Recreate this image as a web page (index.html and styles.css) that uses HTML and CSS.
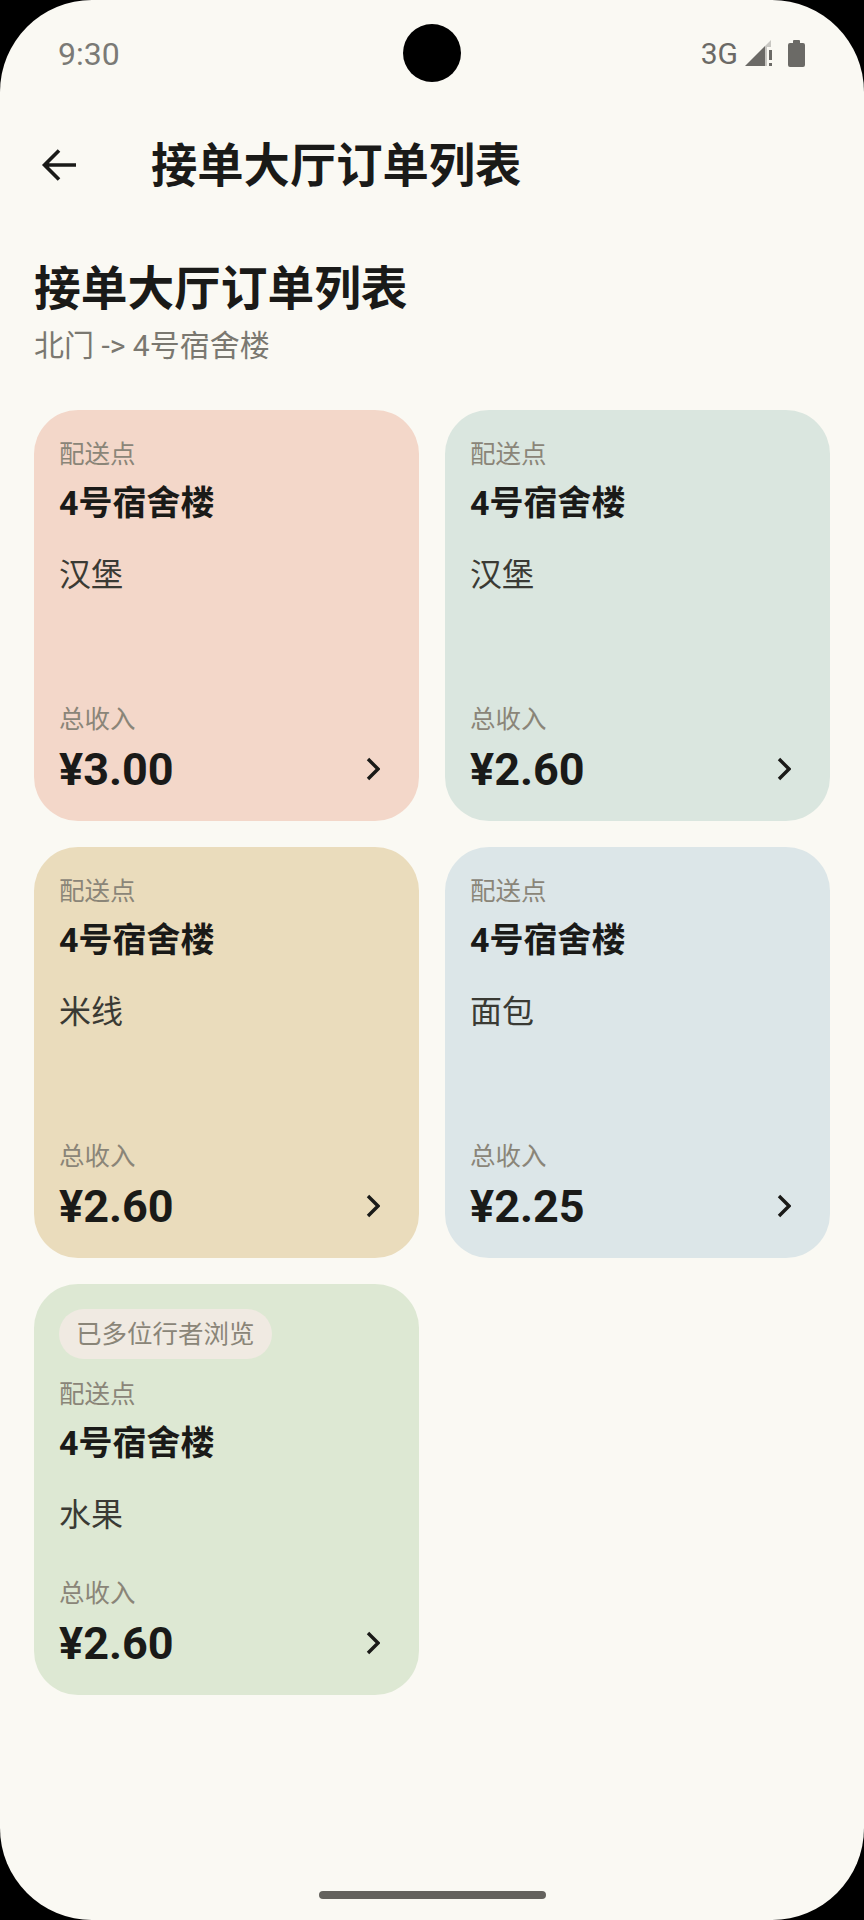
FILE: index.html
```html
<!DOCTYPE html>
<html lang="zh">
<head>
    <meta charset="utf-8">
    <title>接单大厅订单列表</title>
    <link rel="stylesheet" href="styles.css">
</head>
<body>
    <div class="screen">
        <div class="camera"></div>

        <div class="statusbar">
            <span class="time">9:30</span>
            <div class="status-icons">
                <span class="network">3G</span>
                <svg class="signal" width="28" height="28" viewBox="0 0 28 28">
                    <path d="M0 26 L20 6 V26 Z" fill="#6b6a66"/>
                    <path d="M20 6 L26 0 V7 H22 V26 H20 Z" fill="#6b6a66" opacity="0.35"/>
                    <rect x="24" y="10" width="3" height="10" fill="#6b6a66"/>
                    <rect x="24" y="23" width="3" height="3" fill="#6b6a66"/>
                </svg>
                <svg class="battery" width="17" height="28" viewBox="0 0 17 28">
                    <path d="M5 2 Q5 1 6 1 H11 Q12 1 12 2 V4 H15 Q17 4 17 6 V26 Q17 28 15 28 H2 Q0 28 0 26 V6 Q0 4 2 4 H5 Z" fill="#6b6a66"/>
                </svg>
            </div>
        </div>

        <div class="toolbar">
            <svg class="back" width="36" height="36" viewBox="0 0 36 36">
                <path d="M35 18 H4 M18 3.500 L3.500 18 L18 32.500" fill="none" stroke="#1a1a18" stroke-width="3.600"/>
            </svg>
            <h1 class="toolbar-title">接单大厅订单列表</h1>
        </div>

        <div class="heading">
            <h2 class="page-title">接单大厅订单列表</h2>
            <p class="route">北门 -&gt; 4号宿舍楼</p>
        </div>

        <div class="order-grid">
            <div class="order-card card-peach">
                <div class="card-label">配送点</div>
                <div class="card-place">4号宿舍楼</div>
                <div class="card-food">汉堡</div>
                <div class="card-bottom">
                    <div class="card-label">总收入</div>
                    <div class="price-row">
                        <span class="price">¥3.00</span>
                        <svg class="chevron" width="14" height="24" viewBox="0 0 14 24"><path d="M2 2 L12 12 L2 22" fill="none" stroke="#1a1a18" stroke-width="3.400"/></svg>
                    </div>
                </div>
            </div>

            <div class="order-card card-sage">
                <div class="card-label">配送点</div>
                <div class="card-place">4号宿舍楼</div>
                <div class="card-food">汉堡</div>
                <div class="card-bottom">
                    <div class="card-label">总收入</div>
                    <div class="price-row">
                        <span class="price">¥2.60</span>
                        <svg class="chevron" width="14" height="24" viewBox="0 0 14 24"><path d="M2 2 L12 12 L2 22" fill="none" stroke="#1a1a18" stroke-width="3.400"/></svg>
                    </div>
                </div>
            </div>

            <div class="order-card card-sand">
                <div class="card-label">配送点</div>
                <div class="card-place">4号宿舍楼</div>
                <div class="card-food">米线</div>
                <div class="card-bottom">
                    <div class="card-label">总收入</div>
                    <div class="price-row">
                        <span class="price">¥2.60</span>
                        <svg class="chevron" width="14" height="24" viewBox="0 0 14 24"><path d="M2 2 L12 12 L2 22" fill="none" stroke="#1a1a18" stroke-width="3.400"/></svg>
                    </div>
                </div>
            </div>

            <div class="order-card card-blue">
                <div class="card-label">配送点</div>
                <div class="card-place">4号宿舍楼</div>
                <div class="card-food">面包</div>
                <div class="card-bottom">
                    <div class="card-label">总收入</div>
                    <div class="price-row">
                        <span class="price">¥2.25</span>
                        <svg class="chevron" width="14" height="24" viewBox="0 0 14 24"><path d="M2 2 L12 12 L2 22" fill="none" stroke="#1a1a18" stroke-width="3.400"/></svg>
                    </div>
                </div>
            </div>

            <div class="order-card card-green">
                <span class="pill">已多位行者浏览</span>
                <div class="card-label">配送点</div>
                <div class="card-place">4号宿舍楼</div>
                <div class="card-food">水果</div>
                <div class="card-bottom">
                    <div class="card-label">总收入</div>
                    <div class="price-row">
                        <span class="price">¥2.60</span>
                        <svg class="chevron" width="14" height="24" viewBox="0 0 14 24"><path d="M2 2 L12 12 L2 22" fill="none" stroke="#1a1a18" stroke-width="3.400"/></svg>
                    </div>
                </div>
            </div>
        </div>

        <div class="home-bar"></div>
    </div>
</body>
</html>
```

FILE: styles.css
```css
html, body {
    margin: 0;
    padding: 0;
    background-color: #000;
}

body {
    font-family: Roboto, "Noto Sans CJK SC", sans-serif;
    color: #1a1a18;
}

h1, h2, p {
    margin: 0;
}

.screen {
    position: relative;
    display: flex;
    flex-direction: column;
    width: 864px;
    height: 1920px;
    overflow: hidden;
    background-color: #faf9f3;
    border-radius: 92px;
}

.camera {
    position: absolute;
    top: 24px;
    left: 403px;
    width: 58px;
    height: 58px;
    border-radius: 50%;
    background-color: #000;
}

.statusbar {
    display: flex;
    justify-content: space-between;
    align-items: center;
    height: 54px;
    padding: 27px 59px 0 58px;
}

.time {
    font-size: 32px;
    color: #7a7a76;
}

.status-icons {
    display: flex;
    align-items: center;
}

.network {
    font-size: 30px;
    color: #6b6a66;
    margin-right: 7px;
    margin-bottom: 2px;
}

.battery {
    margin-left: 15px;
    margin-bottom: 2px;
}

.toolbar {
    display: flex;
    align-items: center;
    height: 84px;
    margin-top: 42px;
    padding-left: 41px;
}

.back {
    margin-right: 74px;
}

.toolbar-title {
    font-size: 46.300px;
    line-height: 60px;
    font-weight: 700;
    padding-top: 2px;
}

.heading {
    padding: 51px 34px 0 34px;
}

.page-title {
    font-size: 46.700px;
    line-height: 62px;
    font-weight: 700;
}

.route {
    font-size: 30px;
    line-height: 40px;
    color: #7a7870;
    margin-top: 6px;
}

.order-grid {
    display: grid;
    grid-template-columns: 385px 385px;
    grid-auto-rows: 411px;
    gap: 26px;
    padding: 0 34px;
    margin-top: 44px;
}

.order-card {
    display: flex;
    flex-direction: column;
    align-items: flex-start;
    padding: 25px 25px 24px 25px;
    border-radius: 44px;
}

.card-peach { background-color: #f3d7c9; }
.card-sage { background-color: #dae6df; }
.card-sand { background-color: #eadcbc; }
.card-blue { background-color: #dce6e8; }
.card-green { background-color: #dde8d3; }

.pill {
    height: 50px;
    line-height: 50px;
    padding: 0 17px;
    margin-bottom: 16px;
    border-radius: 25px;
    font-size: 25.500px;
    color: #8a8578;
    background-color: #f0eae2;
}

.card-label {
    font-size: 25.500px;
    line-height: 34px;
    margin-top: 2px;
    color: #8a8578;
}

.card-place {
    font-size: 34px;
    line-height: 42px;
    font-weight: 700;
    margin-top: 11px;
}

.card-food {
    font-size: 32px;
    line-height: 40px;
    color: #3a3a34;
    margin-top: 31px;
}

.card-bottom {
    width: 100%;
    margin-top: auto;
}

.price-row {
    display: flex;
    justify-content: space-between;
    align-items: center;
    height: 56px;
    margin-top: 5px;
}

.price {
    font-size: 45px;
    font-weight: 700;
}

.chevron {
    margin-right: 14px;
}

.home-bar {
    position: absolute;
    left: 319px;
    top: 1891px;
    width: 227px;
    height: 8px;
    border-radius: 4px;
    background-color: #64625d;
}
```
